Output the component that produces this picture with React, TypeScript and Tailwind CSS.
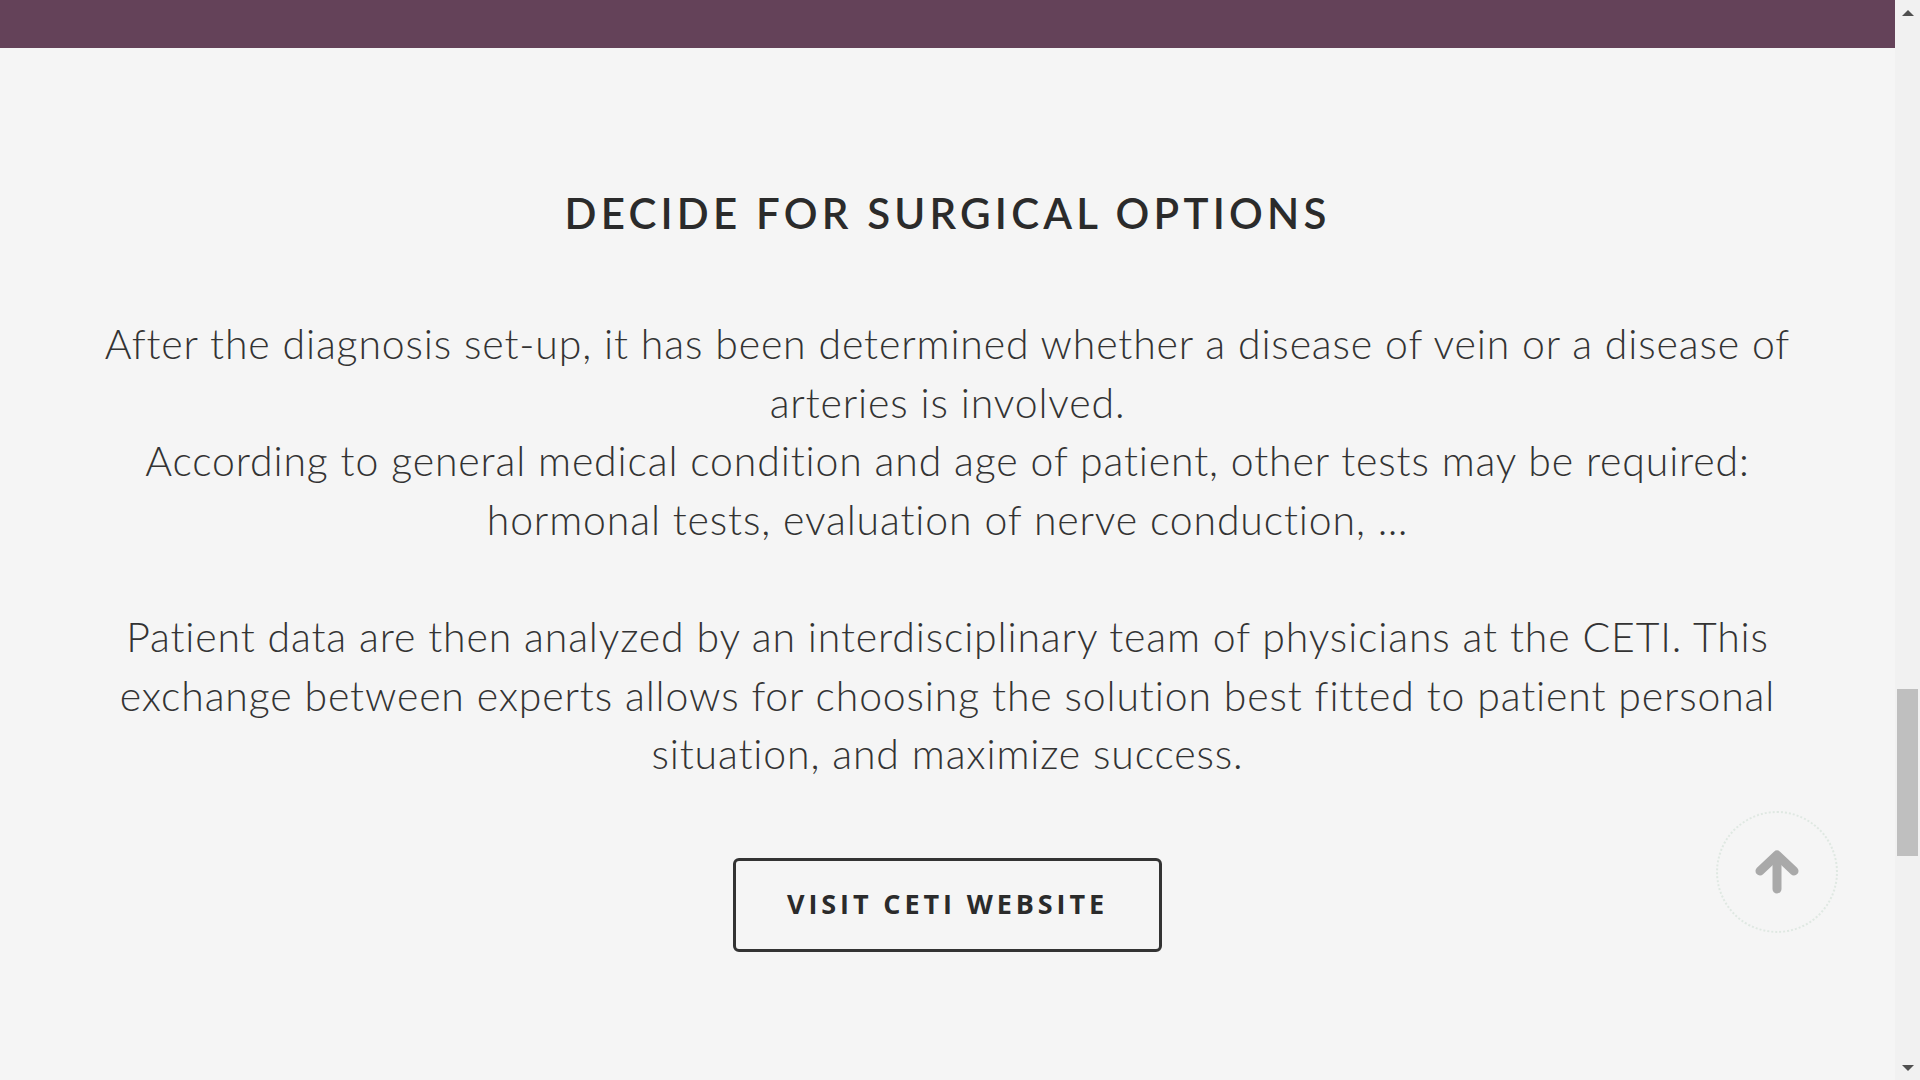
import React from "react";

const firstParagraph = [
  "After the diagnosis set-up, it has been determined whether a disease of vein or a disease of",
  "arteries is involved.",
  "According to general medical condition and age of patient, other tests may be required:",
  "hormonal tests, evaluation of nerve conduction, …",
];

const secondParagraph = [
  "Patient data are then analyzed by an interdisciplinary team of physicians at the CETI. This",
  "exchange between experts allows for choosing the solution best fitted to patient personal",
  "situation, and maximize success.",
];

function ArrowUp() {
  return (
    <svg width="46" height="44" viewBox="0 0 46 44" fill="none">
      <path
        d="M6 21 L23 5 L40 21"
        stroke="#a9a9a9"
        strokeWidth="9"
        strokeLinecap="round"
        strokeLinejoin="round"
      />
      <path d="M23 8 L23 39" stroke="#a9a9a9" strokeWidth="9" strokeLinecap="round" />
    </svg>
  );
}

export default function App() {
  return (
    <div className="relative flex h-[1080px] w-[1920px] overflow-hidden bg-[#f5f5f5]">
      {/* Page */}
      <div className="flex flex-1 flex-col">
        <div className="h-[48px] w-full bg-[#644259]" />

        <section className="flex flex-col items-center font-['Lato',sans-serif] text-[#333333]">
          <h2 className="mt-[141px] text-[42px] font-semibold leading-[48px] tracking-[4.2px] text-[#2b2b2b]">
            DECIDE FOR SURGICAL OPTIONS
          </h2>

          <div className="mt-[78px] flex flex-col items-center text-[41px] font-light leading-[58.6px] tracking-[0.85px]">
            {firstParagraph.map((line) => (
              <p key={line} className="whitespace-nowrap">
                {line}
              </p>
            ))}
            <p className="h-[58.6px]" />
            {secondParagraph.map((line) => (
              <p key={line} className="whitespace-nowrap">
                {line}
              </p>
            ))}
          </div>

          <a
            href="#"
            className="mt-[74px] flex h-[94px] w-[429px] items-center justify-center rounded-[6px] border-[3px] border-[#333333] pb-[2px] font-['Open_Sans',sans-serif] text-[27px] font-bold tracking-[3.9px] text-[#2b2b2b]"
          >
            VISIT CETI WEBSITE
          </a>
        </section>
      </div>

      {/* Browser scrollbar */}
      <div className="relative flex w-[25px] flex-col items-center bg-[#f1f1f1]">
        <div className="mt-[10px] h-0 w-0 border-x-[6px] border-b-[6px] border-x-transparent border-b-[#505050]" />
        <div className="mt-[673px] h-[167px] w-[21px] bg-[#bfbfbf]" />
        <div className="mt-auto mb-[9px] h-0 w-0 border-x-[6px] border-t-[6px] border-x-transparent border-t-[#505050]" />
      </div>

      {/* Back to top */}
      <button className="absolute left-[1716px] top-[811px] flex h-[122px] w-[122px] items-center justify-center rounded-full border-2 border-dotted border-[#dfe8e2]">
        <ArrowUp />
      </button>
    </div>
  );
}
